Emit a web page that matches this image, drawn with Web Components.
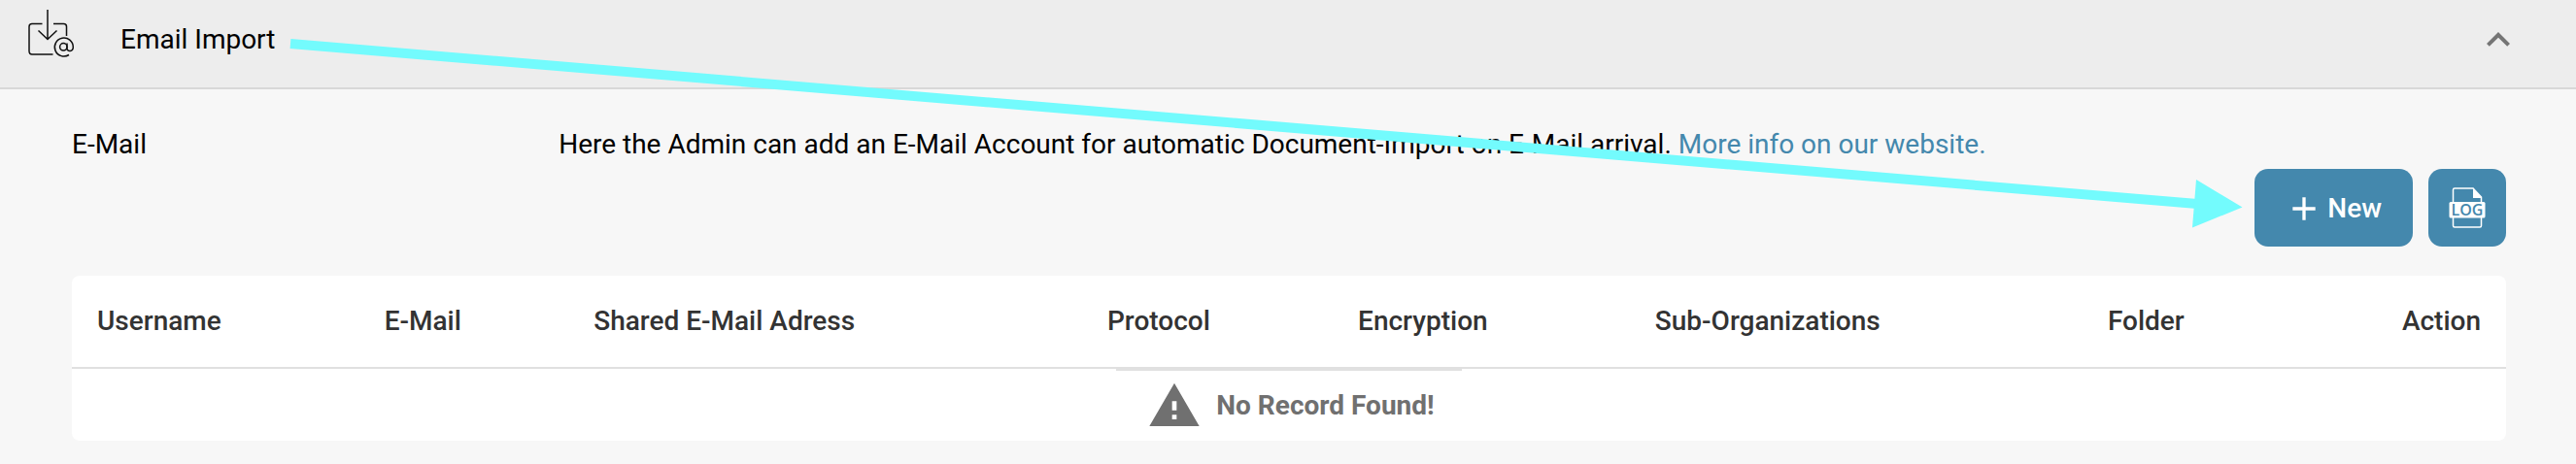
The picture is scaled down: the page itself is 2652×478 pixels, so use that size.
<!DOCTYPE html>
<html lang="en">
<head>
<meta charset="utf-8">
<title>Email Import</title>
<style>
  body { margin: 0; background: #f7f7f7; color: #000; font: 28px/32px Roboto, sans-serif; }
</style>
</head>
<body>
<import-page></import-page>

<template id="t-page">
  <style>
    :host { display: block; position: relative; }
  </style>
  <settings-panel heading="Email Import">
    <setting-row label="E-Mail">Here the Admin can add an E-Mail Account for automatic Document-Import on E-Mail arrival. <text-link>More info on our website.</text-link></setting-row>
    <account-actions></account-actions>
    <account-table></account-table>
  </settings-panel>
  <pointer-arrow></pointer-arrow>
</template>

<template id="t-panel">
  <style>
    :host { display: block; }
    h2 { margin: 0; font: inherit; }
    button {
      display: flex; align-items: center; width: 100%; box-sizing: border-box;
      padding: 10px 56px 18px 28px; border: 0; border-bottom: 2px solid #d8d8d8;
      background: #ededed; color: #000; font: inherit; text-align: left; cursor: pointer;
    }
    .icon { width: 50px; height: 62px; margin-right: 46px; flex: none; }
    .title { flex: 1; }
    .chevron { width: 48px; height: 48px; flex: none; }
    .body { padding: 41px 72px 24px 74px; }
  </style>
  <h2><button type="button" aria-expanded="true">
    <svg class="icon" viewBox="0 0 50 62" fill="none" stroke="#111" stroke-width="1.5" aria-hidden="true">
      <path d="M21 0V30M11.500 21.500 21 30.500 30.500 21.500"/>
      <path d="M15.500 14.500H5Q2 14.500 2 17.500V42.500Q2 46 5 46H26.500M27 14.500H37.500Q40.500 14.500 40.500 17.500V27"/>
      <path d="M43 46.500A9.500 9.500 0 1 1 47.300 38.500C47.300 43.500 41 43.500 41 40V34.500"/>
      <circle cx="37.300" cy="38.300" r="3.700"/>
    </svg>
    <span class="title"></span>
    <svg class="chevron" viewBox="0 0 24 24" fill="#757575" aria-hidden="true"><path d="M12 8l-6 6 1.410 1.410L12 10.830l4.590 4.580L18 14z"/></svg>
  </button></h2>
  <div class="body"><slot></slot></div>
</template>

<template id="t-row">
  <style>
    :host { display: grid; grid-template-columns: 1fr 4fr; }
  </style>
  <span class="label"></span>
  <span><slot></slot></span>
</template>

<template id="t-link">
  <style>
    :host { display: inline; }
    a { color: #4488ad; text-decoration: none; }
  </style>
  <a href="#info"><slot></slot></a>
</template>

<template id="t-actions">
  <style>
    :host { display: flex; justify-content: flex-end; gap: 16px; padding: 9px 0 30px; }
  </style>
  <action-button>
    <svg width="40" height="40" viewBox="0 0 24 24" fill="#fff" aria-hidden="true"><path d="M19 13h-6v6h-2v-6H5v-2h6V5h2v6h6z"/></svg>
    <span>New</span>
  </action-button>
  <action-button square label="Log">
    <svg width="40" height="44" viewBox="0 0 40 44" aria-hidden="true">
      <path d="M5.500 16V3.500Q5.500 2 7 2H26L34.500 11V16M5.500 32V40.500Q5.500 42 7 42H33Q34.500 42 34.500 40.500V32" fill="none" stroke="#fff" stroke-width="1.500"/>
      <path d="M26 1.500 35 12H26Z" fill="#fff"/>
      <rect x="1.500" y="16" width="37" height="16.500" rx="1.500" fill="#fff"/>
      <text x="20" y="29.500" text-anchor="middle" font-family="Open Sans, sans-serif" font-weight="600" font-size="16" fill="#4488ad">LOG</text>
    </svg>
  </action-button>
</template>

<template id="t-button">
  <style>
    :host { display: block; }
    button {
      display: flex; align-items: center; justify-content: center; gap: 4px;
      height: 80px; padding: 2px 32px 0 31px; border: 0; border-radius: 14px;
      background: #4488ad; color: #fff; font: inherit; font-weight: 500; cursor: pointer;
    }
    :host([square]) button { width: 80px; padding: 0; }
  </style>
  <button type="button"><slot></slot></button>
</template>

<template id="t-table">
  <style>
    :host { display: block; background: #fff; border-radius: 8px; overflow: hidden; }
    table { width: 100%; border-collapse: separate; border-spacing: 0; table-layout: fixed; }
    th {
      height: 94px; padding: 0 26px; border-bottom: 2px solid #e0e0e0;
      color: #333; font-weight: 500; text-align: left; white-space: nowrap;
    }
    th:last-child { text-align: right; }
    td { padding: 0; height: 74px; vertical-align: top; text-align: center; }
  </style>
  <table>
    <colgroup>
      <col style="width:11.8%"><col style="width:8.6%"><col style="width:21.1%"><col style="width:10.3%">
      <col style="width:12.2%"><col style="width:18.6%"><col style="width:11.4%"><col style="width:6%">
    </colgroup>
    <thead><tr>
      <th scope="col">Username</th><th scope="col">E-Mail</th><th scope="col">Shared E-Mail Adress</th><th scope="col">Protocol</th>
      <th scope="col">Encryption</th><th scope="col">Sub-Organizations</th><th scope="col">Folder</th><th scope="col">Action</th>
    </tr></thead>
    <tbody><tr><td colspan="8"><empty-notice>No Record Found!</empty-notice></td></tr></tbody>
  </table>
</template>

<template id="t-empty">
  <style>
    :host {
      display: inline-flex; align-items: center; gap: 15px; padding: 8px 28px 8px 32px;
      border-top: 2px solid #e0e0e0; color: #707070; font-weight: 700;
    }
    svg { width: 56px; height: 56px; }
  </style>
  <svg viewBox="0 0 24 24" fill="#707070" aria-hidden="true"><path d="M1 21h22L12 2 1 21zm12-3h-2v-2h2v2zm0-4h-2v-4h2v4z"/></svg>
  <slot></slot>
</template>

<template id="t-arrow">
  <style>
    :host { display: block; position: absolute; inset: 0; pointer-events: none; }
    svg { display: block; width: 100%; }
  </style>
  <svg viewBox="0 0 2652 478" aria-hidden="true">
    <path d="M299 45 2262 210" stroke="#73fbfd" stroke-width="10"/>
    <path d="M2261 185 2308.500 213.500 2257 234.500Z" fill="#73fbfd"/>
  </svg>
</template>

<script>
  class TemplateElement extends HTMLElement {
    constructor() {
      super();
      this.attachShadow({ mode: 'open' })
        .append(document.getElementById(this.constructor.template).content.cloneNode(true));
    }
  }
  customElements.define('text-link', class extends TemplateElement { static template = 't-link'; });
  customElements.define('empty-notice', class extends TemplateElement { static template = 't-empty'; });
  customElements.define('pointer-arrow', class extends TemplateElement { static template = 't-arrow'; });
  customElements.define('account-table', class extends TemplateElement { static template = 't-table'; });
  customElements.define('action-button', class extends TemplateElement {
    static template = 't-button';
    connectedCallback() {
      const label = this.getAttribute('label');
      if (label) this.shadowRoot.querySelector('button').setAttribute('aria-label', label);
    }
  });
  customElements.define('account-actions', class extends TemplateElement { static template = 't-actions'; });
  customElements.define('setting-row', class extends TemplateElement {
    static template = 't-row';
    connectedCallback() {
      this.shadowRoot.querySelector('.label').textContent = this.getAttribute('label');
    }
  });
  customElements.define('settings-panel', class extends TemplateElement {
    static template = 't-panel';
    connectedCallback() {
      const root = this.shadowRoot;
      root.querySelector('.title').textContent = this.getAttribute('heading');
      const button = root.querySelector('button');
      button.addEventListener('click', () => {
        const body = root.querySelector('.body');
        body.hidden = !body.hidden;
        button.setAttribute('aria-expanded', String(!body.hidden));
      });
    }
  });
  customElements.define('import-page', class extends TemplateElement { static template = 't-page'; });
</script>
</body>
</html>
